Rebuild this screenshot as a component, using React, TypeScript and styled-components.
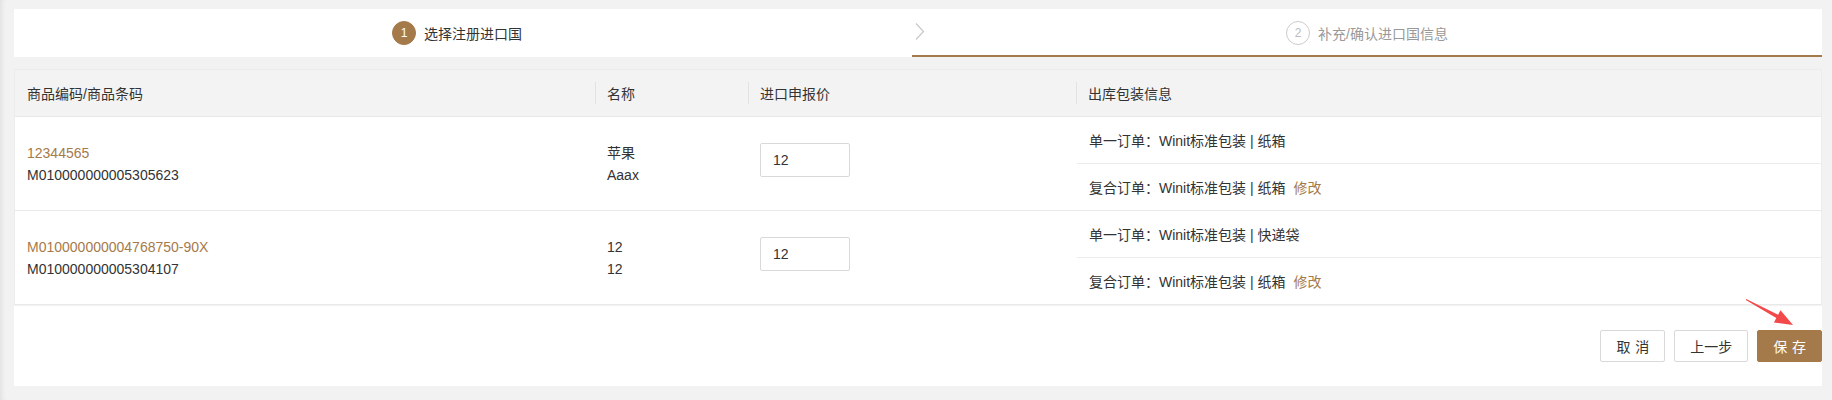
import React from 'react';
import styled, { createGlobalStyle } from 'styled-components';

const BROWN = '#a57a4a';

const GlobalStyle = createGlobalStyle`
  html, body { margin: 0; padding: 0; background: #f2f2f2; }
  body {
    font-family: "Liberation Sans", "Noto Sans CJK SC", sans-serif;
    font-size: 14px;
    color: #333;
  }
  * { box-sizing: border-box; }
`;

const Page = styled.div`
  min-height: 400px;
  padding: 9px 10px 0 14px;
  box-shadow: inset 5px 0 5px -3px rgba(0, 0, 0, 0.07);
`;

const Steps = styled.div`
  display: grid;
  grid-template-columns: 898px 1fr;
  height: 48px;
  background: #fff;
`;

const Step = styled.div<{ $underline?: boolean; $shift?: number }>`
  position: relative;
  display: flex;
  align-items: center;
  justify-content: center;
  gap: 8px;
  padding-top: 2px;
  padding-right: ${(p) => p.$shift ?? 0}px;
  border-bottom: 2px solid ${(p) => (p.$underline ? BROWN : 'transparent')};
`;

const StepNum = styled.span<{ $active?: boolean }>`
  width: 24px;
  height: 24px;
  border-radius: 50%;
  display: inline-flex;
  align-items: center;
  justify-content: center;
  font-size: 12px;
  background: ${(p) => (p.$active ? BROWN : '#fff')};
  color: ${(p) => (p.$active ? '#fff' : '#bbb')};
  border: 1px solid ${(p) => (p.$active ? BROWN : '#ccc')};
`;

const StepLabel = styled.span<{ $active?: boolean }>`
  font-size: 14px;
  color: ${(p) => (p.$active ? '#333' : '#999')};
`;

const Chevron = styled.svg`
  position: absolute;
  left: 3px;
  top: 14px;
`;

const Table = styled.div`
  margin-top: 12px;
  background: #fff;
  border: 1px solid #ececec;
  border-bottom: none;
`;

const Row = styled.div<{ $head?: boolean }>`
  display: grid;
  grid-template-columns: 580px 153px 328px 1fr;
  height: ${(p) => (p.$head ? 47 : 94)}px;
  background: ${(p) => (p.$head ? '#f3f3f3' : '#fff')};
  border-bottom: 1px solid #e9e9e9;
`;

const HeadCell = styled.div<{ $divider?: boolean }>`
  position: relative;
  display: flex;
  align-items: center;
  padding: 0 12px;
  color: #333;
  &::before {
    content: '';
    display: ${(p) => (p.$divider ? 'block' : 'none')};
    position: absolute;
    left: 0;
    top: 12px;
    width: 1px;
    height: 22px;
    background: #e2e2e2;
  }
`;

const Cell = styled.div`
  display: flex;
  flex-direction: column;
  justify-content: center;
  padding: 0 12px;
  line-height: 22px;
`;

const Code = styled.span<{ $link?: boolean }>`
  color: ${(p) => (p.$link ? BROWN : '#333')};
`;

const PriceCell = styled.div`
  padding: 26px 12px 0;
`;

const PriceInput = styled.input`
  width: 90px;
  height: 34px;
  border: 1px solid #d9d9d9;
  border-radius: 2px;
  padding: 0 12px;
  font: inherit;
  font-size: 14px;
  color: #333;
  outline: none;
`;

const DetailCell = styled.div`
  display: flex;
  flex-direction: column;
  margin-left: 1px;
`;

const DetailLine = styled.div<{ $sep?: boolean }>`
  height: ${(p) => (p.$sep ? 47 : 46)}px;
  display: flex;
  align-items: center;
  padding-left: 12px;
  border-top: ${(p) => (p.$sep ? '1px solid #ececec' : 'none')};
`;

const EditLink = styled.span`
  color: ${BROWN};
  margin-left: 8px;
  cursor: pointer;
`;

const Footer = styled.div`
  position: relative;
  margin-top: 1px;
  height: 80px;
  background: #fff;
  display: flex;
  justify-content: flex-end;
  align-items: center;
  gap: 9px;
`;

const Button = styled.button<{ $primary?: boolean }>`
  height: 32px;
  padding: 0 15px;
  border-radius: 2px;
  border: 1px solid ${(p) => (p.$primary ? BROWN : '#d9d9d9')};
  background: ${(p) => (p.$primary ? BROWN : '#fff')};
  color: ${(p) => (p.$primary ? '#fff' : '#333')};
  font: inherit;
  font-size: 14px;
  white-space: nowrap;
  cursor: pointer;
`;

const Spaced = styled.span`
  display: inline-block;
  white-space: nowrap;
  letter-spacing: 0.34em;
  margin-right: -0.34em;
`;

const Arrow = styled.svg`
  position: absolute;
  right: 22px;
  top: -11px;
`;

type Item = {
  code: string;
  barcode: string;
  name: string;
  name2: string;
  price: string;
  single: string;
  combo: string;
};

const items: Item[] = [
  {
    code: '12344565',
    barcode: 'M010000000005305623',
    name: '苹果',
    name2: 'Aaax',
    price: '12',
    single: '单一订单：Winit标准包装 | 纸箱',
    combo: '复合订单：Winit标准包装 | 纸箱',
  },
  {
    code: 'M010000000004768750-90X',
    barcode: 'M010000000005304107',
    name: '12',
    name2: '12',
    price: '12',
    single: '单一订单：Winit标准包装 | 快递袋',
    combo: '复合订单：Winit标准包装 | 纸箱',
  },
];

export default function App() {
  return (
    <>
      <GlobalStyle />
      <Page>
        <Steps>
          <Step $shift={12}>
            <StepNum $active>1</StepNum>
            <StepLabel $active>选择注册进口国</StepLabel>
          </Step>
          <Step $underline>
            <Chevron width="10" height="17" viewBox="0 0 10 17">
              <polyline points="1,0.5 8.5,8.5 1,16.5" fill="none" stroke="#c8c8c8" strokeWidth="1.2" />
            </Chevron>
            <StepNum>2</StepNum>
            <StepLabel>补充/确认进口国信息</StepLabel>
          </Step>
        </Steps>

        <Table>
          <Row $head>
            <HeadCell>商品编码/商品条码</HeadCell>
            <HeadCell $divider>名称</HeadCell>
            <HeadCell $divider>进口申报价</HeadCell>
            <HeadCell $divider>出库包装信息</HeadCell>
          </Row>
          {items.map((it) => (
            <Row key={it.barcode}>
              <Cell>
                <Code $link>{it.code}</Code>
                <Code>{it.barcode}</Code>
              </Cell>
              <Cell>
                <span>{it.name}</span>
                <span>{it.name2}</span>
              </Cell>
              <PriceCell>
                <PriceInput defaultValue={it.price} />
              </PriceCell>
              <DetailCell>
                <DetailLine>{it.single}</DetailLine>
                <DetailLine $sep>
                  {it.combo}
                  <EditLink>修改</EditLink>
                </DetailLine>
              </DetailCell>
            </Row>
          ))}
        </Table>

        <Footer>
          <Button>
            <Spaced>取消</Spaced>
          </Button>
          <Button>上一步</Button>
          <Button $primary>
            <Spaced>保存</Spaced>
          </Button>
          <Arrow width="60" height="35" viewBox="0 0 60 35">
            <polygon
              points="6.2,4 38.1,19.8 40.5,15.3 53,30 33.9,27.5 36.3,23 5.8,5"
              fill="#f24a4a"
            />
          </Arrow>
        </Footer>
      </Page>
    </>
  );
}
